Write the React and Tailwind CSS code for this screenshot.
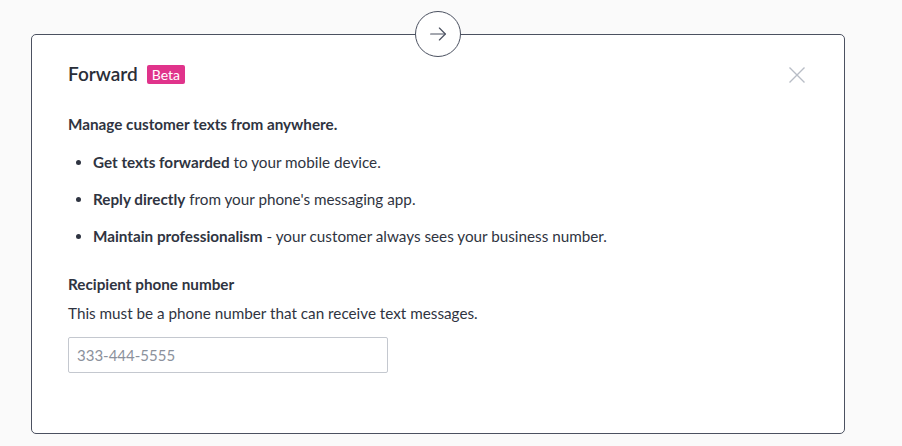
import React from "react";

const points = [
  { b: "Get texts forwarded", t: " to your mobile device." },
  { b: "Reply directly", t: " from your phone's messaging app." },
  { b: "Maintain professionalism", t: " - your customer always sees your business number." },
];

export default function App() {
  return (
    <div className="h-[446px] w-[902px] bg-[#fafafa] pt-[34px] pl-[31px] font-['Lato',sans-serif] text-[#2f3441]">
      <div className="relative h-[400px] w-[814px] rounded-[5px] border border-[#4b5160] bg-white">
        {/* arrow bubble */}
        <div className="absolute -top-[24px] left-[383px] flex h-[46px] w-[46px] items-center justify-center rounded-full border border-[#4b5160] bg-white">
          <svg width="22" height="22" viewBox="0 0 24 24" fill="none" stroke="#4b5160" strokeWidth="1.3" strokeLinecap="round" strokeLinejoin="round">
            <path d="M4 12h16" />
            <path d="M13.5 5.5 20 12l-6.5 6.5" />
          </svg>
        </div>

        {/* close */}
        <button className="absolute right-[38px] top-[31px] text-[#b8bdc6]">
          <svg width="18" height="18" viewBox="0 0 18 18" fill="none" stroke="currentColor" strokeWidth="1.4">
            <path d="M1.5 1.5l15 15M16.5 1.5l-15 15" />
          </svg>
        </button>

        <div className="px-[36px] pt-[27px]">
          <div className="flex items-center gap-[9px]">
            <h1 className="text-[19px] font-semibold leading-[24px] text-[#2a2e38]">Forward</h1>
            <span className="rounded-[2px] bg-[#e0338b] px-[5px] text-[14px] leading-[19px] text-white">Beta</span>
          </div>

          <p className="mt-[28px] text-[15.25px] font-bold leading-[20px]">Manage customer texts from anywhere.</p>

          <ul className="mt-[18px] flex flex-col gap-[17px] pl-[8px]">
            {points.map((p) => (
              <li key={p.b} className="flex items-center text-[15.25px] leading-[20px]">
                <span className="mr-[12px] h-[5px] w-[5px] rounded-full bg-[#2f3441]" />
                <span>
                  <b className="font-bold">{p.b}</b>
                  {p.t}
                </span>
              </li>
            ))}
          </ul>

          <p className="mt-[28px] text-[15.25px] font-bold leading-[20px]">Recipient phone number</p>
          <p className="mt-[9px] text-[15.25px] leading-[20px]">This must be a phone number that can receive text messages.</p>

          <input
            placeholder="333-444-5555"
            className="mt-[14px] h-[36px] w-[320px] rounded-[2px] border border-[#c4c8cf] px-[8px] text-[15px] placeholder:text-[#8b919c] outline-none"
          />
        </div>
      </div>
    </div>
  );
}
